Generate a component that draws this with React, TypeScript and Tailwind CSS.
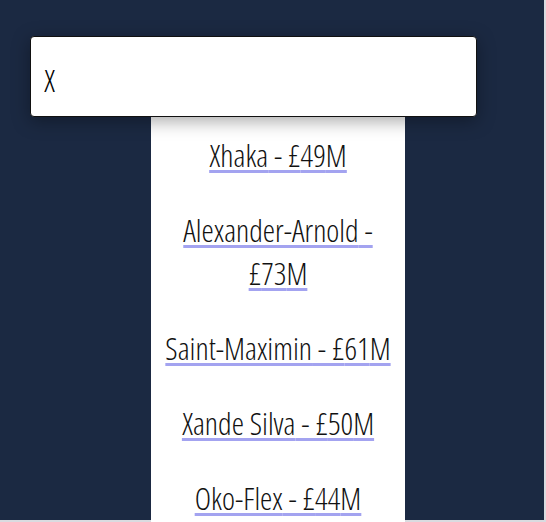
import React, { useState } from "react";

const players = [
    { name: "Xhaka", price: 49 },
    { name: "Alexander-Arnold", price: 73 },
    { name: "Saint-Maximin", price: 61 },
    { name: "Xande Silva", price: 50 },
    { name: "Oko-Flex", price: 44 },
];

export default function App() {
    const [query, setQuery] = useState("X");

    return (
        <div className="min-h-screen bg-[#d9dbe0]">
            <div
                className="w-[544px] h-[520px] bg-[#1b2942] pt-9 px-[30px] font-light"
                style={{ fontFamily: '"Open Sans", sans-serif', fontStretch: "75%" }}
            >
                <div className="w-[447px]">
                    <input
                        type="text"
                        value={query}
                        onChange={(e) => setQuery(e.target.value)}
                        className="w-full h-[81px] px-[13px] pt-[6px] bg-white border border-[#111] rounded-[4px] text-[31px] text-black shadow-[0_4px_18px_rgba(0,0,0,0.35)] outline-none"
                    />
                    {/* suggestions */}
                    <ul className="w-[254px] ml-[121px] bg-white pt-[17px] pb-2 flex flex-col gap-[32px]">
                        {players.map((p) => (
                            <li key={p.name} className="text-center px-3">
                                <a
                                    href="#"
                                    className="text-[31px] leading-[43px] text-[#111] underline decoration-[#a3a3f0] decoration-[3px] underline-offset-[3px]"
                                >
                                    {p.name} - £{p.price}M
                                </a>
                            </li>
                        ))}
                    </ul>
                </div>
            </div>
        </div>
    );
}
